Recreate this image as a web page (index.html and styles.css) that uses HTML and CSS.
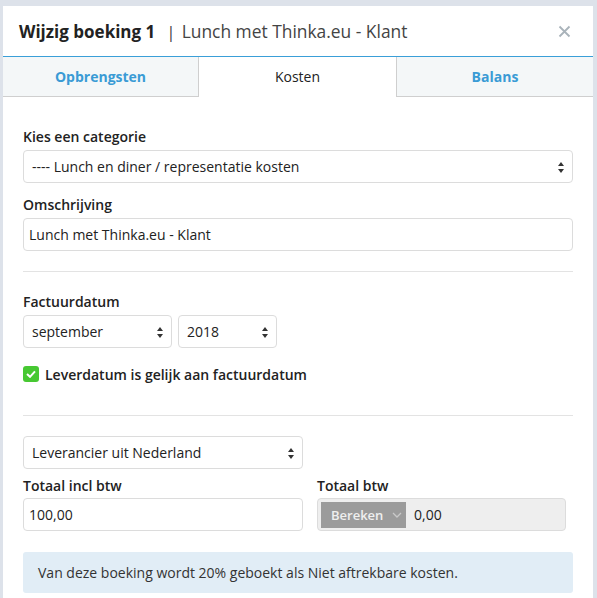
FILE: index.html
```html
<!DOCTYPE html>
<html>
<head>
<meta charset="utf-8">
<link rel="stylesheet" href="styles.css">
</head>
<body>
<div class="modal">
  <div class="modal-header">
    <span class="title">Wijzig boeking 1</span>
    <span class="sep">|</span>
    <span class="subtitle">Lunch met Thinka.eu - Klant</span>
    <span class="close">
      <svg width="13" height="13" viewBox="0 0 13 13"><path d="M1.5 1.5 L11.5 11.5 M11.5 1.5 L1.5 11.5" stroke="#a9b3ba" stroke-width="1.8" fill="none"/></svg>
    </span>
  </div>
  <div class="tabs">
    <div class="tab">Opbrengsten</div>
    <div class="tab active">Kosten</div>
    <div class="tab">Balans</div>
  </div>
  <div class="content">
    <div class="field">
      <label class="lbl">Kies een categorie</label>
      <div class="select full">---- Lunch en diner / representatie kosten<span class="arrows"></span></div>
    </div>
    <div class="field">
      <label class="lbl">Omschrijving</label>
      <div class="input full">Lunch met Thinka.eu - Klant</div>
    </div>
    <hr class="divider">
    <div class="field">
      <label class="lbl">Factuurdatum</label>
      <div class="row-dates">
        <div class="select month">september<span class="arrows"></span></div>
        <div class="select year">2018<span class="arrows"></span></div>
      </div>
    </div>
    <div class="check-row">
      <span class="checkbox">
        <svg width="10" height="8" viewBox="0 0 10 8"><path d="M1 4 L4 6.8 L9 1.3" stroke="#fff" stroke-width="2" fill="none"/></svg>
      </span>
      <span class="check-lbl">Leverdatum is gelijk aan factuurdatum</span>
    </div>
    <hr class="divider second">
    <div class="select supplier">Leverancier uit Nederland<span class="arrows"></span></div>
    <div class="totals">
      <div class="col">
        <label class="lbl">Totaal incl btw</label>
        <div class="input">100,00</div>
      </div>
      <div class="col col-btw">
        <label class="lbl">Totaal btw</label>
        <div class="input disabled">
          <span class="btn-calc">Bereken
            <svg width="10" height="6" viewBox="0 0 10 6"><path d="M1 1 L5 5 L9 1" stroke="#c9c9c9" stroke-width="1.3" fill="none"/></svg>
          </span>
          <span class="val">0,00</span>
        </div>
      </div>
    </div>
    <div class="alert">Van deze boeking wordt 20% geboekt als Niet aftrekbare kosten.</div>
  </div>
</div>
</body>
</html>
```

FILE: styles.css
```css
* { box-sizing: border-box; }
html, body {
  margin: 0;
  padding: 0;
  background: #dde2ea;
  font-family: "Open Sans", "Liberation Sans", sans-serif;
  color: #333;
}
.modal {
  margin: 6px 0 0 3px;
  width: 590px;
  height: 600px;
  background: #fff;
}
.modal-header {
  height: 51px;
  border-bottom: 1px solid #3a9fd8;
  display: flex;
  align-items: center;
  padding: 0 22px 0 16px;
  font-size: 17px;
}
.title {
  font-weight: 700;
  color: #222;
}
.sep {
  margin: 0 6px 0 11px;
  color: #444;
}
.subtitle {
  color: #444;
  font-size: 17.4px;
}
.close {
  margin-left: auto;
  display: flex;
}
.tabs {
  display: flex;
  height: 40px;
}
.tab {
  flex: 0 0 197px;
  display: flex;
  align-items: center;
  justify-content: center;
  background: #f4f7f8;
  color: #3a9bd5;
  font-weight: 700;
  font-size: 14px;
  border-bottom: 1px solid #cfcfcf;
}
.tab:first-child {
  flex-basis: 196px;
  border-right: 1px solid #cfcfcf;
}
.tab:last-child {
  border-left: 1px solid #cfcfcf;
}
.tab.active {
  background: #fff;
  color: #222;
  font-weight: 400;
  border-bottom-color: transparent;
}
.content {
  padding: 30px 20px 0 20px;
}
.field {
  margin-bottom: 12px;
}
.lbl {
  display: block;
  font-size: 14px;
  font-weight: 600;
  color: #222;
  line-height: 20px;
  margin-bottom: 3px;
}
.select, .input {
  position: relative;
  height: 33px;
  border: 1px solid #dcdcdc;
  border-radius: 4px;
  font-size: 14px;
  line-height: 31px;
  color: #222;
  background: #fff;
  white-space: nowrap;
}
.select {
  padding-left: 8px;
}
.input {
  padding-left: 5px;
}
.arrows {
  position: absolute;
  right: 7px;
  top: 11px;
  width: 7px;
  height: 11px;
}
.arrows::before, .arrows::after {
  content: "";
  position: absolute;
  left: 0;
  border-left: 3.5px solid transparent;
  border-right: 3.5px solid transparent;
}
.arrows::before {
  top: 0;
  border-bottom: 4px solid #333;
}
.arrows::after {
  bottom: 0;
  border-top: 4px solid #333;
}
.full { width: 550px; }
.divider {
  border: 0;
  border-top: 1px solid #e3e3e3;
  margin: 20px 0 20px 0;
}
.row-dates {
  display: flex;
  gap: 6px;
}
.month { width: 149px; }
.year { width: 99px; }
.check-row {
  display: flex;
  align-items: center;
  margin-top: 16px;
  height: 20px;
}
.checkbox {
  width: 16px;
  height: 16px;
  border-radius: 3px;
  background: #47c832;
  display: inline-flex;
  align-items: center;
  justify-content: center;
  margin-right: 6px;
}
.check-lbl {
  font-size: 14px;
  font-weight: 600;
  color: #222;
}
.divider.second {
  margin: 31px 0 20px 0;
}
.supplier {
  width: 280px;
  margin-bottom: 7px;
}
.totals {
  display: flex;
  gap: 14px;
}
.col { width: 280px; }
.col-btw { width: 249px; }
.col .lbl { margin-bottom: 2px; }
.col .input { height: 33px; }
.input.disabled {
  background: #eeeeee;
  padding: 3px;
  display: flex;
  align-items: center;
  line-height: normal;
}
.btn-calc {
  height: 26px;
  width: 85px;
  background: #9b9b9b;
  color: #efefef;
  font-size: 13px;
  font-weight: 600;
  display: flex;
  align-items: center;
  padding-left: 10px;
  gap: 9px;
}
.val {
  margin-left: 8px;
  font-size: 14px;
  color: #222;
}
.alert {
  margin-top: 21px;
  height: 41px;
  width: 550px;
  background: #e1edf6;
  border-radius: 3px;
  font-size: 14px;
  color: #333;
  padding-left: 15px;
  display: flex;
  align-items: center;
}
```
